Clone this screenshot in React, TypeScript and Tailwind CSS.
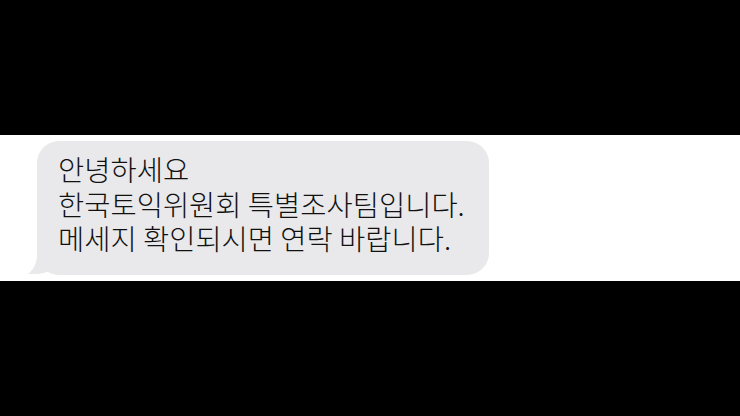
import React from "react";

export default function App() {
  return (
    <div className="w-[740px] h-[416px] flex flex-col bg-black overflow-hidden">
      <div className="h-[135px] bg-black" />
      <div className="h-[146px] bg-white pt-[6px] pl-[37px]">
        <div className="relative w-[452px] h-[134px] rounded-[22px] bg-[#e9e9eb] pl-[21px] pt-[11px]">
          <svg
            className="absolute left-[-10px] bottom-[0px]"
            width="30"
            height="24"
            viewBox="0 0 30 24"
          >
            <path
              d="M10 0 L22 0 L22 20 C18 22 14 23 9 23 C5 23 2 23 1 23 C6 19 9 14 10 6 Z"
              fill="#e9e9eb"
            />
          </svg>
          <div
            className="relative text-[28.5px] leading-[34.5px] text-[#111] font-light"
            style={{ fontFamily: '"Noto Sans CJK KR", "Noto Sans", sans-serif' }}
          >
            <div>안녕하세요</div>
            <div>한국토익위원회 특별조사팀입니다.</div>
            <div>메세지 확인되시면 연락 바랍니다.</div>
          </div>
        </div>
      </div>
      <div className="flex-1 bg-black" />
    </div>
  );
}
